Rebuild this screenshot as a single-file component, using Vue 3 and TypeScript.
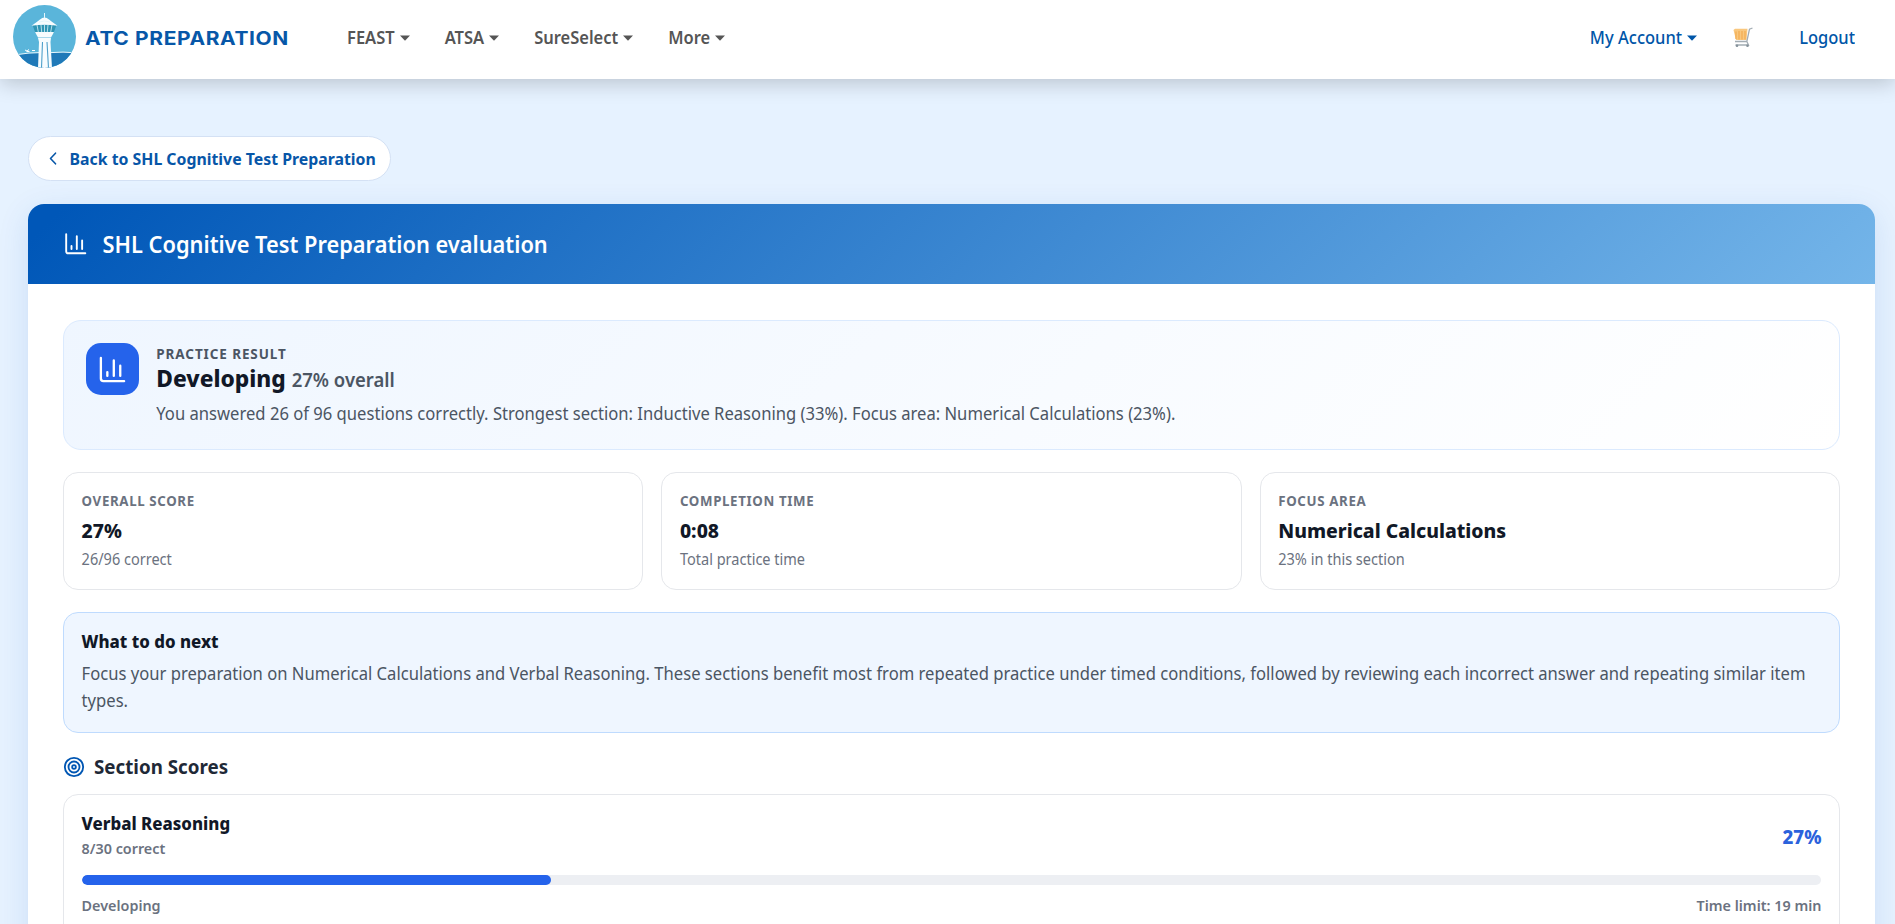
<script setup lang="ts">
interface Stat { label: string; value: string; note: string }
interface Section { name: string; correct: string; percent: number; level: string; limit: string }

const menu: string[] = ['FEAST', 'ATSA', 'SureSelect', 'More']
const stats: Stat[] = [
  { label: 'Overall score', value: '27%', note: '26/96 correct' },
  { label: 'Completion time', value: '0:08', note: 'Total practice time' },
  { label: 'Focus area', value: 'Numerical Calculations', note: '23% in this section' },
]
const sections: Section[] = [
  { name: 'Verbal Reasoning', correct: '8/30 correct', percent: 27, level: 'Developing', limit: 'Time limit: 19 min' },
]
</script>

<template>
  <div class="page">
    <header class="topbar">
      <a class="brand">
        <svg class="logo" viewBox="0 0 63 63">
          <defs><clipPath id="disc"><circle cx="31.5" cy="31.5" r="31.5" /></clipPath></defs>
          <g clip-path="url(#disc)">
            <rect width="63" height="63" fill="#5ab5da" />
            <path d="M0 50Q14 48 27 48H38Q52 46.500 63 48V63H0Z" fill="#1f79b8" />
            <path d="M5 49.500Q16 47.500 27 47.600M38 47.600Q50 46.500 62 47.800" stroke="#e8f6fc" stroke-width="1" fill="none" />
            <path d="M12 45l2 1 2-1.500M13.500 46.500h3M19 45.500h3" stroke="#fff" stroke-width="1" fill="none" />
            <path d="M25 33H38L37.500 37L39 63H25L26 37Z" fill="#f7fcfe" />
            <path d="M29.500 37L28.500 63M34 37L35.500 63" stroke="#4d9fca" stroke-width="1.100" />
            <path d="M19.500 20H43.500L40.500 28H22.500Z" fill="#2f95b4" />
            <path d="M24 20l1.500 8M28 20l.8 8M31.500 20v8M35 20l-.8 8M39 20l-1.500 8" stroke="#d8f1f8" stroke-width=".8" />
            <path d="M22 27H41L38 32.500H25Z" fill="#f7fcfe" />
            <path d="M18.500 20.800Q24 17 27 14.500Q31.500 10.500 36 14.500Q39 17 44.500 20.800Q31.500 18.500 18.500 20.800Z" fill="#f7fcfe" />
            <path d="M31.500 8V13M26 17Q31.500 15 37 17" stroke="#e4f5fb" stroke-width="1" fill="none" />
          </g>
        </svg>
        <span class="brand-name">ATC PREPARATION</span>
      </a>
      <nav class="menu">
        <a v-for="item in menu" :key="item" class="link">{{ item }}<i class="caret"></i></a>
      </nav>
      <nav class="account">
        <a class="link">My Account<i class="caret"></i></a>
        <svg class="cart" viewBox="0 0 20 21">
          <path d="M.5 3L2 1.800H14.500L13.500 13H3Z" fill="#f9c77d" />
          <path d="M3 4.500V12M6 4V12.500M9 4V12.500M12 4V12.500" stroke="#f2ab50" stroke-width="1.200" />
          <path d="M19.500 1L16.500 2.200L13.800 14.500M2 14.500H13.800L15.500 18H2.500" fill="none" stroke="#a3adb4" stroke-width="1.300" />
          <circle cx="4" cy="18.800" r="1.300" fill="#84919a" /><circle cx="14.500" cy="18.800" r="1.300" fill="#84919a" />
        </svg>
        <a class="link">Logout</a>
      </nav>
    </header>

    <main class="content">
      <a class="back">
        <svg class="chevron" viewBox="0 0 8 13"><path d="M6.500 1.200L1.500 6.500L6.500 11.800" /></svg>
        <span>Back to SHL Cognitive Test Preparation</span>
      </a>

      <article class="card">
        <div class="card-head">
          <svg class="chart" viewBox="0 0 24 24"><path d="M3 3v16a2 2 0 0 0 2 2h16M18 17V9M13 17V5M8 17v-3" /></svg>
          <h1>SHL Cognitive Test Preparation evaluation</h1>
        </div>
        <div class="card-body">
          <section class="result">
            <div class="tile">
              <svg class="chart" viewBox="0 0 24 24"><path d="M3 3v16a2 2 0 0 0 2 2h16M18 17V9M13 17V5M8 17v-3" /></svg>
            </div>
            <div>
              <div class="kicker">Practice result</div>
              <div class="grade">Developing <span>27% overall</span></div>
              <p class="summary">You answered 26 of 96 questions correctly. Strongest section: Inductive Reasoning (33%). Focus area: Numerical Calculations (23%).</p>
            </div>
          </section>

          <section class="stats">
            <div v-for="s in stats" :key="s.label" class="stat">
              <div class="stat-label">{{ s.label }}</div>
              <div class="stat-value">{{ s.value }}</div>
              <div class="stat-note">{{ s.note }}</div>
            </div>
          </section>

          <section class="next">
            <h2>What to do next</h2>
            <p>Focus your preparation on Numerical Calculations and Verbal Reasoning. These sections benefit most from repeated practice under timed conditions, followed by reviewing each incorrect answer and repeating similar item types.</p>
          </section>

          <h2 class="scores-title">
            <svg class="target" viewBox="0 0 24 24"><circle cx="12" cy="12" r="10" /><circle cx="12" cy="12" r="6" /><circle cx="12" cy="12" r="2" /></svg>
            <span>Section Scores</span>
          </h2>
          <section v-for="s in sections" :key="s.name" class="score">
            <div class="score-top">
              <div>
                <div class="score-name">{{ s.name }}</div>
                <div class="score-meta">{{ s.correct }}</div>
              </div>
              <div class="score-percent">{{ s.percent }}%</div>
            </div>
            <div class="track"><div class="fill" :style="{ width: s.percent + '%' }"></div></div>
            <div class="score-foot"><span>{{ s.level }}</span><span>{{ s.limit }}</span></div>
          </section>
        </div>
      </article>
    </main>
  </div>
</template>

<style>
body { margin: 0; overflow: hidden; }
</style>

<style scoped>
.page { height: 924px; overflow: hidden; background: #e6f2ff; font-family: "Noto Sans", "Open Sans", sans-serif; color: #111827; }
h1, h2, p { margin: 0; }

/* Slightly narrow letterforms, stretched from the baseline */
.link, .card-head h1, .summary, .next h2, .score-name, .stat-note { transform: scaleY(1.075); transform-origin: 0 74%; }
.kicker, .stat-label, .stat-value, .grade, .back span, .scores-title span, .score-percent { transform: scaleY(1.045); transform-origin: 0 74%; }

.topbar { position: relative; z-index: 1; height: 79px; box-sizing: border-box; padding: 0 40px 6px 13px; display: flex; align-items: center; background: #fff; box-shadow: 0 4px 20px rgba(0, 0, 0, .2); }
.brand { display: flex; align-items: center; gap: 9px; width: 334px; }
.logo { width: 63px; height: 63px; flex: none; }
.brand-name { font: 700 18.200px/28px Inter, sans-serif; letter-spacing: .540px; color: #0757a8; white-space: nowrap; padding-top: 3px; transform: scaleX(1.152); transform-origin: 0 50%; }
.menu { display: flex; gap: 35px; padding-top: 2px; }
.link { display: flex; align-items: center; font-size: 16.500px; line-height: 24px; font-weight: 500; white-space: nowrap; color: #555; }
.menu .link { font-size: 16.500px; font-weight: 600; }
.caret { border: 5px solid transparent; border-top-color: currentColor; border-bottom: 0; margin: 1px 0 0 5px; }
.account { margin-left: auto; display: flex; align-items: center; padding-top: 2px; }
.account .link { color: #0056a8; }
.cart { width: 20px; height: 21px; margin: 0 46px 0 36px; }

.content { padding: 57px 20px 0 28px; }
.back { display: flex; width: fit-content; box-sizing: border-box; height: 45px; align-items: center; gap: 12.500px; padding: 0 14.500px 0 20px; border: 1px solid #d4e1f4; border-radius: 23px; background: #fff; color: #0756a8; font-size: 15.850px; font-weight: 700; line-height: 22px; white-space: nowrap; }
.chevron { width: 8px; height: 13px; fill: none; stroke: currentColor; stroke-width: 1.600; stroke-linecap: round; stroke-linejoin: round; }

.card { margin-top: 23px; height: 1100px; border-radius: 16px; overflow: hidden; background: #fff; box-shadow: 0 8px 32px rgba(0, 86, 179, .12); }
.card-head { height: 80px; box-sizing: border-box; padding-left: 35px; display: flex; align-items: center; gap: 14px; color: #fff; background: linear-gradient(135deg, #0057b8 2%, #74b5e9); }
.card-head h1 { font-size: 21.820px; line-height: 32px; font-weight: 600; padding-top: 1px; }
.chart { width: 25.500px; height: 25.500px; fill: none; stroke: #fff; stroke-width: 1.800; stroke-linecap: round; stroke-linejoin: round; }
.card-body { padding: 36px 35px; }

.result { box-sizing: border-box; height: 130px; padding: 22px; display: flex; gap: 17.300px; border: 1px solid #dbeafe; border-radius: 18px; background: linear-gradient(135deg, #eff6ff, #fff); }
.tile { width: 53px; height: 52px; display: flex; align-items: center; justify-content: center; border-radius: 15px; background: #2563eb; flex: none; }
.tile .chart { width: 31px; height: 31px; }
.kicker { font-size: 13.500px; line-height: 22px; font-weight: 700; letter-spacing: .900px; text-transform: uppercase; color: #4b5563; }
.grade { margin-top: 1px; font-size: 22.720px; line-height: 26.400px; font-weight: 800; }
.grade span { font-size: 18.500px; font-weight: 600; color: #4b5563; }
.summary { margin-top: 6.800px; font-size: 16.620px; line-height: 27px; color: #4b5563; white-space: nowrap; }

.stats { margin-top: 22px; display: grid; grid-template-columns: repeat(3, 1fr); gap: 18px; }
.stat { box-sizing: border-box; height: 118px; padding: 18px 17.600px; border: 1px solid #e5e7eb; border-radius: 15px; }
.stat-label { font-size: 13.300px; line-height: 21.700px; font-weight: 700; letter-spacing: .630px; text-transform: uppercase; color: #6b7280; }
.stat-value { margin-top: 4.600px; font-size: 19.370px; line-height: 28px; font-weight: 800; }
.stat-note { margin-top: 3px; font-size: 14.530px; line-height: 23px; color: #6b7280; }

.next { margin-top: 22px; box-sizing: border-box; height: 121px; padding: 17.600px; border: 1px solid #bfdbfe; border-radius: 15px; background: #eff6ff; }
.next h2 { font-size: 16.850px; line-height: 21.600px; font-weight: 800; }
.next p { margin-top: 8px; font-size: 16.630px; line-height: 25.300px; color: #4b5563; transform: scaleY(1.067); transform-origin: 0 0; }

.scores-title { margin: 20px 0 13px; display: flex; align-items: center; gap: 9px; font-size: 18.750px; line-height: 28px; font-weight: 700; color: #1f2937; }
.target { width: 22px; height: 22px; fill: none; stroke: #0056b3; stroke-width: 2; }
.score { box-sizing: border-box; height: 150px; padding: 17.600px; border: 1px solid #e5e7eb; border-radius: 15px; }
.score-top { display: flex; justify-content: space-between; align-items: center; }
.score-name { font-size: 16.850px; line-height: 21px; font-weight: 800; }
.score-meta { margin-top: 5.800px; font-size: 14.350px; line-height: 20px; font-weight: 600; color: #6b7280; }
.score-percent { font-size: 18.700px; line-height: 26px; font-weight: 800; color: #2b62dc; padding-top: 2px; }
.track { margin-top: 15.600px; height: 10px; border-radius: 5px; background: #edeff3; overflow: hidden; }
.fill { height: 100%; border-radius: 5px; background: #2563eb; }
.score-foot { margin-top: 11.400px; display: flex; justify-content: space-between; font-size: 14.370px; line-height: 20px; font-weight: 600; color: #6b7280; }
</style>
